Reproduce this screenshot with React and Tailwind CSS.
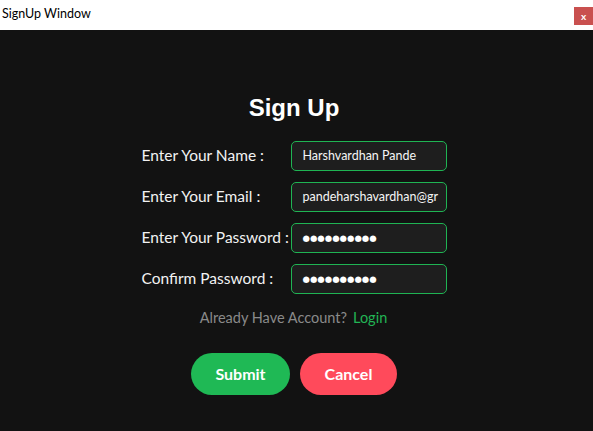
import React from "react";

export default function App() {
  const label = "text-[15.5px] text-[#f2f2f2] leading-none whitespace-nowrap shrink-0";
  const input =
    "w-[156px] h-[30px] shrink-0 rounded-[5px] border-[1.5px] border-[#1fb453] bg-[#1e1e1e] text-[#f5f5f5] pl-[11px] pr-[2px] flex items-center overflow-hidden whitespace-nowrap";
  const rows = [
    { l: "Enter Your Name :", v: "Harshvardhan Pande" },
    { l: "Enter Your Email :", v: "pandeharshavardhan@gr" },
    { l: "Enter Your Password :", v: "●●●●●●●●●●", pw: true },
    { l: "Confirm Password :", v: "●●●●●●●●●●", pw: true },
  ];
  return (
    <div className="w-[593px] h-[431px] flex flex-col overflow-hidden" style={{ fontFamily: "Lato, 'Noto Sans', sans-serif" }}>
      <div className="h-[30px] bg-white flex items-start justify-between shrink-0">
        <span className="text-[12.5px] text-black pl-[2px] pt-[8px] leading-none">SignUp Window</span>
        <div className="mt-[7px] w-[19px] h-[18px] bg-[#c9504f] flex items-center justify-center text-white text-[10px] font-bold leading-none">
          x
        </div>
      </div>
      <div className="flex-1 bg-[#121212] flex flex-col items-center pr-[5px]">
        <h1
          className="mt-[66px] text-[24px] font-bold text-white leading-none"
          style={{ fontFamily: "'Liberation Sans', Arial, sans-serif" }}
        >
          Sign Up
        </h1>
        <div className="mt-[21px] w-[305px] flex flex-col gap-[11px]">
          {rows.map((r) => (
            <div key={r.l} className="flex items-center justify-between">
              <span className={label}>{r.l}</span>
              <div className={input}>
                {r.pw ? (
                  <span className="text-[8.5px] text-white" style={{ fontFamily: "'DejaVu Sans', sans-serif" }}>{r.v}</span>
                ) : (
                  <span className="text-[12.5px] leading-none">{r.v}</span>
                )}
              </div>
            </div>
          ))}
        </div>
        <div className="mt-[17px] text-[14.5px] leading-none flex gap-[6px] pr-[1px]">
          <span className="text-[#8a8a8a]">Already Have Account?</span>
          <span className="text-[#22b455]">Login</span>
        </div>
        <div className="mt-[27px] flex gap-[10px]">
          <button className="w-[99px] h-[42px] rounded-full bg-[#1fb955] text-white font-bold text-[16px]">
            Submit
          </button>
          <button className="w-[97px] h-[42px] rounded-full bg-[#ff4a5b] text-white font-bold text-[16px]">
            Cancel
          </button>
        </div>
      </div>
    </div>
  );
}
